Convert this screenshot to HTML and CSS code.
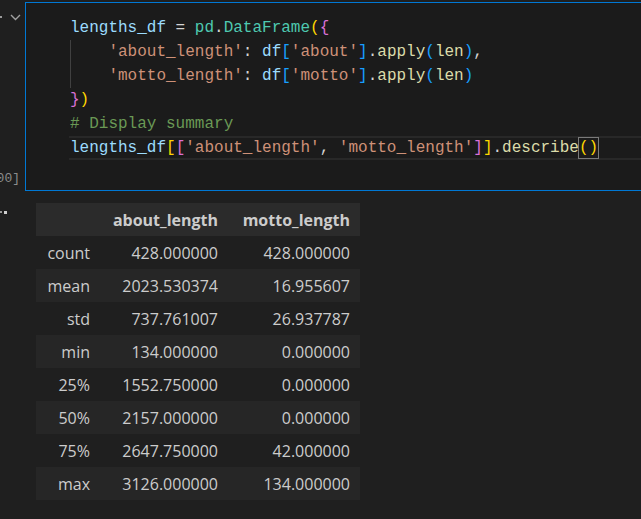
FILE: index.html
```html
<!DOCTYPE html>
<html>
<head>
<meta charset="utf-8">
<link rel="stylesheet" href="styles.css">
</head>
<body>
<div class="notebook">
  <div class="cell-row">
    <div class="gutter">
      <div class="gutter-top">
        <span class="dot"></span>
        <svg class="chev" width="11" height="7" viewBox="0 0 11 7"><path d="M1 1 L5.5 5.5 L10 1" fill="none" stroke="#a0a0a0" stroke-width="1.4"/></svg>
      </div>
      <div class="exec-count"><span>[100]</span></div>
    </div>
    <div class="cell">
      <div class="code">
        <div class="line"><span class="v">lengths_df</span><span class="p"> = </span><span class="t">pd</span><span class="p">.</span><span class="t">DataFrame</span><span class="b1">(</span><span class="b2">{</span></div>
        <div class="indent">
          <div class="line"><span class="p">    </span><span class="s">'about_length'</span><span class="p">: </span><span class="v">df</span><span class="b3">[</span><span class="s">'about'</span><span class="b3">]</span><span class="p">.</span><span class="f">apply</span><span class="b3">(</span><span class="f">len</span><span class="b3">)</span><span class="p">,</span></div>
          <div class="line"><span class="p">    </span><span class="s">'motto_length'</span><span class="p">: </span><span class="v">df</span><span class="b3">[</span><span class="s">'motto'</span><span class="b3">]</span><span class="p">.</span><span class="f">apply</span><span class="b3">(</span><span class="f">len</span><span class="b3">)</span></div>
        </div>
        <div class="line"><span class="b2">}</span><span class="b1">)</span></div>
        <div class="line"><span class="c"># Display summary</span></div>
        <div class="line current"><span class="v">lengths_df</span><span class="b1">[</span><span class="b2">[</span><span class="s">'about_length'</span><span class="p">, </span><span class="s">'motto_length'</span><span class="b2">]</span><span class="b1">]</span><span class="p">.</span><span class="f">describe</span><span class="match"><span class="b1">()</span></span></div>
      </div>
    </div>
  </div>
  <div class="output-row">
    <div class="out-gutter"><span class="sdot"></span><span class="sdot"></span></div>
    <div class="output">
      <table class="df">
        <colgroup><col class="c0"><col class="c1"><col class="c2"></colgroup>
        <thead>
          <tr><th></th><th>about_length</th><th>motto_length</th></tr>
        </thead>
        <tbody>
          <tr><th>count</th><td>428.000000</td><td>428.000000</td></tr>
          <tr><th>mean</th><td>2023.530374</td><td>16.955607</td></tr>
          <tr><th>std</th><td>737.761007</td><td>26.937787</td></tr>
          <tr><th>min</th><td>134.000000</td><td>0.000000</td></tr>
          <tr><th>25%</th><td>1552.750000</td><td>0.000000</td></tr>
          <tr><th>50%</th><td>2157.000000</td><td>0.000000</td></tr>
          <tr><th>75%</th><td>2647.750000</td><td>42.000000</td></tr>
          <tr><th>max</th><td>3126.000000</td><td>134.000000</td></tr>
        </tbody>
      </table>
    </div>
  </div>
</div>
</body>
</html>
```
FILE: styles.css
```css
html, body {
  margin: 0;
  padding: 0;
  background: #1f1f1f;
  overflow: hidden;
}
.notebook {
  padding-top: 2px;
  width: 641px;
  overflow: hidden;
}
.cell-row {
  display: flex;
}
.gutter {
  width: 25px;
  flex: none;
  display: flex;
  flex-direction: column;
  overflow: hidden;
}
.gutter-top {
  display: flex;
  align-items: center;
  height: 10px;
  margin-top: 10px;
}
.dot {
  width: 2px;
  height: 2px;
  background: #9a9a9a;
  margin-right: 8px;
}
.chev {
  display: block;
}
.exec-count {
  margin-top: auto;
  display: flex;
  justify-content: flex-end;
  padding-right: 5px;
  padding-bottom: 4px;
  font-family: "Liberation Mono", monospace;
  font-size: 13px;
  line-height: 16px;
  color: #8c8c8c;
  white-space: pre;
}
.cell {
  flex: none;
  width: 640px;
  border: 1px solid #0078d4;
  background: #1b1b1b;
  padding: 13px 0 30px 43px;
  box-sizing: border-box;
}
.code {
  font-family: "Liberation Mono", monospace;
  font-size: 16px;
  line-height: 24px;
  color: #d4d4d4;
}
.line {
  height: 24px;
  padding-left: 1px;
  white-space: pre;
}
.indent {
  background: linear-gradient(#404040, #404040) no-repeat 1px 0 / 1px 100%;
}
.current {
  box-sizing: border-box;
  border-top: 2px solid #282828;
  border-bottom: 2px solid #282828;
  line-height: 20px;
}
.match {
  outline: 1px solid #7a7a7a;
  outline-offset: 0;
  display: inline-block;
  height: 20px;
}
.v { color: #9cdcfe; }
.t { color: #4ec9b0; }
.p { color: #d4d4d4; }
.s { color: #ce9178; }
.f { color: #dcdcaa; }
.c { color: #6a9955; }
.b1 { color: #ffd700; }
.b2 { color: #da70d6; }
.b3 { color: #179fff; }

.output-row {
  display: flex;
  margin-top: 11px;
}
.out-gutter {
  width: 25px;
  flex: none;
  display: flex;
  gap: 2px;
  padding-top: 9px;
  align-items: flex-start;
}
.sdot {
  width: 2px;
  height: 2px;
  background: #9a9a9a;
}
.sdot + .sdot {
  width: 3px;
  height: 3px;
  background: #cfcfcf;
}
.output {
  padding-left: 11px;
  padding-top: 1px;
}
.df {
  border-collapse: collapse;
  table-layout: fixed;
  width: 324px;
  font-family: "Open Sans", "Noto Sans", sans-serif;
  font-size: 16px;
  color: #cccccc;
}
.c0 { width: 64px; }
.c1 { width: 128px; }
.c2 { width: 132px; }
.df th, .df td {
  height: 33px;
  padding: 0 10px;
  text-align: right;
  font-weight: normal;
  white-space: nowrap;
}
.df thead th {
  font-weight: bold;
  background: #2b2b2b;
}
.df tbody tr:nth-child(even) {
  background: #262626;
}
```
